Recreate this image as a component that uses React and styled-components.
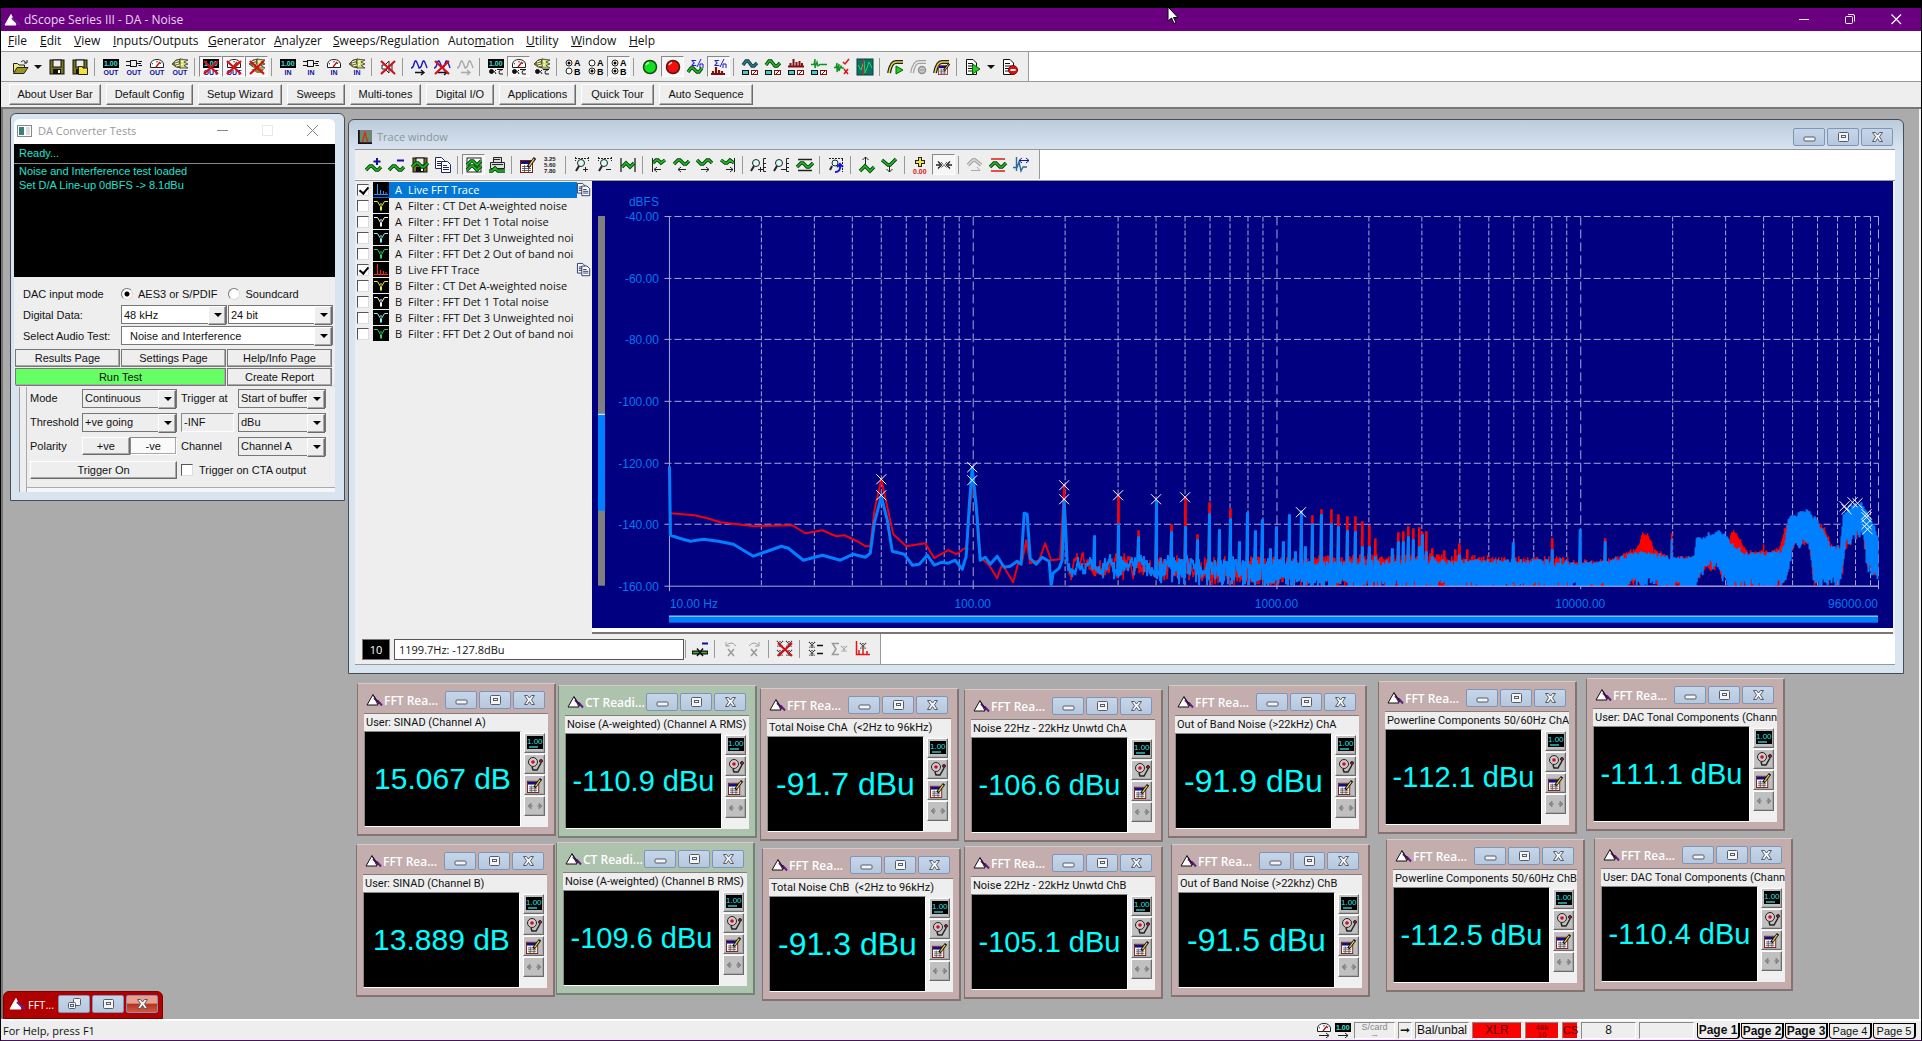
import React from 'react';
import styled, { createGlobalStyle, css } from 'styled-components';

const GlobalStyle = createGlobalStyle`
  * {
    box-sizing: border-box;
  }
  body {
    margin: 0;
    background: #000;
    overflow: hidden;
  }
  button, input, select {
    font: inherit;
    color: inherit;
    margin: 0;
    padding: 0;
    border-radius: 0;
  }
`;

const UI = '"Open Sans", "Noto Sans", sans-serif';
const CLASSIC = '"Liberation Sans", Arial, sans-serif';

const raised = css`
  border: 1px solid;
  border-color: #fff #6b6b6b #6b6b6b #fff;
  box-shadow: inset -1px -1px 0 #a8a8a8;
`;

const sunken = css`
  border: 1px solid;
  border-color: #8a8a8a #fff #fff #8a8a8a;
`;

/* ---------- icons ---------- */

const Svg = styled.svg`
  display: block;
  flex: none;
  overflow: visible;
`;

const Wave = ({ d = 'M0 10L4 6H6L10 10H12L16 6', c = '#20c020', o = '#063c10' }) => (
  <g fill="none">
    <path d={d} stroke={o} strokeWidth="3.4" />
    <path d={d} stroke={c} strokeWidth="1.6" />
  </g>
);

const Display = () => (
  <g>
    <rect x="0" y="0" width="16" height="9" fill="#000" />
    <text x="1" y="7" fontSize="7" fontFamily="Liberation Sans" fontWeight="bold" fill="#3fe0d8">1.00</text>
  </g>
);

const Plug = () => (
  <g fill="none" stroke="#111" strokeWidth="1">
    <path d="M0 2.5H4M0 6.5H4M4.5 1V8M4.5 1.5H10.5V7.5H4.5M10.5 4.5H15M12.5 2.5H16M12.5 6.5H16" />
  </g>
);

const Gauge = () => (
  <g>
    <path d="M1.5 8.5V5Q2.5 .5 8 .5T14.500 5V8.500Z" fill="#fff" stroke="#222" />
    <path d="M3 4.500L4 5M8 2V3.500M12 3.500L11 5" stroke="#222" />
    <path d="M7 8L11 3" stroke="#d00000" strokeWidth="1.3" />
  </g>
);

const Horn = () => (
  <g>
    <path d="M0 5L4 1L9 0V9L4 8Z" fill="#77771a" stroke="#333" strokeWidth=".8" />
    <path d="M8 0L16 1L12 3L16 5L12 6.500L16 9L8 9Z" fill="#d8e070" stroke="#333" strokeWidth=".8" />
    <path d="M3 3L7 1.500M3 5L7 4M4 7L8 6M9 2L11 3M9 6L11 5" stroke="#fff" fill="none" />
  </g>
);

const Caption = ({ t }) => (
  <text x="8" y="16" textAnchor="middle" fontSize="7" fontFamily="Liberation Sans" fontWeight="bold" fill="#1010a0">{t}</text>
);

const Knob = () => (
  <g fill="none" stroke="#111">
    <circle cx="3.500" cy="12.500" r="2" fill="#111" />
    <path d="M8 11Q5 12 8 15M9 10.500H15M14 11Q10 11 11.500 15H15" />
  </g>
);

const Cross = () => <path d="M1 2L15 15M15 2L1 15" stroke="#d01018" strokeWidth="2.2" />;
const Hatch = ({ x = 0, y = 0, c = '#222' }) => (
  <path d={`M${x} ${y}l6 6m0-6l-6 6M${x + 3} ${y}v6`} stroke={c} strokeWidth="1.200" strokeDasharray="1 .7" fill="none" />
);

const Radios = ({ a, b }) => (
  <g>
    <circle cx="4" cy="4" r="3" fill="#fff" stroke="#222" />
    <circle cx="4" cy="12" r="3" fill="#fff" stroke="#222" />
    {a && <circle cx="4" cy="4" r="1.500" />}
    {b && <circle cx="4" cy="12" r="1.500" />}
    <text x="9" y="7" fontSize="9" fontFamily="Liberation Sans" fontWeight="bold">A</text>
    <text x="9" y="16" fontSize="9" fontFamily="Liberation Sans" fontWeight="bold">B</text>
  </g>
);

const Panels = () => (
  <g strokeWidth="1">
    <rect x="0.500" y="11.500" width="6" height="4" fill="#40d0c8" stroke="#111" />
    <rect x="9.500" y="11.500" width="6" height="4" fill="#fff" stroke="#801010" />
    <path d="M11 15L14 12" stroke="#801010" />
  </g>
);

const Bars = ({ c = '#e02020' }) => (
  <path d="M0 7.500H16M2.500 8V4M5.500 8V0M8.500 8V3M11.500 8V2M14 8V4" stroke={c} strokeWidth="2" fill="none" />
);

const Sigma = () => (
  <g>
    <text x="3" y="7" fontSize="9" fontFamily="Liberation Sans" fontWeight="bold" fill="#1818d0">Σ</text>
    <path d="M9 8L13 0M12 9V5H15V9" stroke="#1818d0" fill="none" />
  </g>
);

const Lens = ({ x = 8, sign }) => (
  <g fill="none" stroke="#222">
    <circle cx={x} cy="6" r="3.500" fill="#d8fbf8" />
    <path d={`M${x - 2} 9L${x - 5} 14`} strokeWidth="2" />
    <path d={sign === '+' ? `M${x + 2} 12.500h5M${x + 4.5} 10v5` : `M${x + 2} 12.500h5`} />
  </g>
);

const Page = ({ x = 0, y = 0 }) => (
  <g>
    <path d={`M${x + .5} ${y + .5}h6l3 3v8h-9z`} fill="#fff" stroke="#202860" />
    <path d={`M${x + 2} ${y + 4.500}h4M${x + 2} ${y + 6.500}h6M${x + 2} ${y + 8.500}h6`} stroke="#202860" />
  </g>
);

const Notes = () => (
  <g>
    <rect x="0.500" y="3.500" width="12" height="12" fill="#fff" stroke="#801818" />
    <rect x="1" y="4" width="11" height="3" fill="#101080" />
    <path d="M2 9.500H11M2 11.500H11M2 13.500H11M4.500 8V15M8.500 8V15" stroke="#444" strokeWidth=".8" />
    <path d="M8 10L15 1" stroke="#111" strokeWidth="3" />
    <path d="M9 9L14 2" stroke="#e8d040" strokeWidth="1.300" />
  </g>
);

const Curve = ({ c = '#222', f = '#e0d840' }) => (
  <g fill="none">
    <path d="M1 14Q3 3 8 3H15" stroke={c} strokeWidth="4" />
    <path d="M1 14Q3 3 8 3H15" stroke={f} strokeWidth="1.500" />
  </g>
);

const Folder = () => (
  <g>
    <path d="M1.500 13.500V4.500H5.500L7 6H12.500V8" fill="#f0e880" stroke="#222" />
    <path d="M1.500 14.500L5 8.500H16L12 14.500Z" fill="#9a9420" stroke="#222" />
    <path d="M9 3Q12 0 14 4M12 4H15V1" fill="none" stroke="#222" />
  </g>
);

const Floppy = ({ green }) => (
  <g>
    <rect x="1" y="1" width="14" height="14" fill="#77731a" stroke="#111" />
    <rect x="4" y="1" width="8" height="7" fill="#ececec" stroke="#111" />
    <rect x="4" y="10" width="8" height="5" fill="#111" />
    <rect x="9" y="11" width="2" height="3" fill="#fff" />
    {green && <Wave />}
  </g>
);

const Sine = ({ c = '#1818c0', a = '#111' }) => (
  <g fill="none" stroke={c} strokeWidth="1.400">
    <path d="M0 9Q2 9 3 5T5 2T8 9Q10 9 11 5T13 2T16 9" />
    <path d="M4 13.500H13M10 11L13 13.500L10 16" stroke={a} />
  </g>
);

const icons = {
  open: <Folder />,
  save: <Floppy />,
  saveAs: <g><Floppy /><path d="M6.500 15.500V7.500H10L11 9H15.500V15.500Z" fill="#f0e040" stroke="#222" /></g>,
  dispOut: <g><Display /><Caption t="OUT" /></g>,
  plugOut: <g><Plug /><Caption t="OUT" /></g>,
  gaugeOut: <g><Gauge /><Caption t="OUT" /></g>,
  hornOut: <g><Horn /><Caption t="OUT" /></g>,
  dispOff: <g><Display /><Caption t="OUT" /><Cross /></g>,
  gaugeOff: <g><Gauge /><Caption t="OUT" /><Cross /></g>,
  hornOff: <g><Horn /><path d="M2 10L8 14H13L15 10Z" fill="#8a8a20" /><Cross /></g>,
  dispIn: <g><Display /><Caption t="IN" /></g>,
  plugIn: <g><Plug /><Caption t="IN" /></g>,
  gaugeIn: <g><Gauge /><Caption t="IN" /></g>,
  hornIn: <g><Horn /><Caption t="IN" /></g>,
  mute: <g><path d="M2 6H5L9 2V14L5 10H2ZM12 4V12" fill="#fff" stroke="#222" /><Cross /></g>,
  sine: <Sine />,
  sineOff: <g><Sine /><Cross /></g>,
  sineGrey: <Sine c="#a8a8a8" a="#a8a8a8" />,
  dispKnob: <g><Display /><Knob /></g>,
  gaugeKnob: <g><Gauge /><Knob /></g>,
  hornKnob: <g><Horn /><Knob /></g>,
  chA: <Radios a />,
  chB: <Radios b />,
  chAB: <Radios a b />,
  go: <g><circle cx="8" cy="8" r="6.500" fill="#10e020" stroke="#164a16" strokeWidth="1.500" /><path d="M4 6Q5 4 7 3.500" stroke="#d0ffd0" fill="none" strokeWidth="1.500" /></g>,
  stop: <g><circle cx="8" cy="8" r="6.500" fill="#f01010" stroke="#5a1010" strokeWidth="1.500" /><path d="M4 6Q5 4 7 3.500" stroke="#ffd0d0" fill="none" strokeWidth="1.500" /></g>,
  sumWave: <g><Wave d="M0 13L3 9H5L9 13H11L14 9" /><Sigma /></g>,
  sumBars: <g><path d="M0 15H14M2 15V12M5 15V8M8 15V11M11 15V12" stroke="#801010" strokeWidth="2.200" fill="none" /><Sigma /></g>,
  wavePanelsBlue: <g><Wave d="M1 6L4 2H6L10 7H12L15 4" c="#2a7a80" o="#123c48" /><Panels /></g>,
  wavePanels: <g><Wave d="M1 6L4 2H6L10 7H12L15 4" /><Panels /></g>,
  barPanels: <g><Bars c="#801010" /><Panels /></g>,
  decayPanels: <g><path d="M0 5.500H3L4 0V9L6 3L7 7L9 5.500H16" stroke="#109020" strokeWidth="1.300" fill="none" /><Panels /></g>,
  decayTest: <g><path d="M0 8.500H2L3 4V13L5 5V12L7 7L8 9H10" stroke="#109020" strokeWidth="1.300" fill="none" /><path d="M9 3L11 5L15 0M10 10L14 15M14 10L10 15" stroke="#e01010" strokeWidth="1.500" fill="none" /></g>,
  scope: <g><rect x="0" y="0" width="16" height="16" fill="#0c7068" stroke="#083c3c" /><path d="M1 6L4 11L7 2L8 14L10 9L12 3L15 9" stroke="#30d050" fill="none" /><path d="M6.500 0V16" stroke="#d02020" /></g>,
  traceLogo: <g><rect x="0" y="0" width="16" height="16" fill="#7c7c7c" /><path d="M1 0V15H16" stroke="#111" strokeWidth="2" fill="none" /><path d="M3 8L6 12L8 2L10 12L13 5" stroke="#20c030" strokeWidth="1.500" fill="none" /><path d="M5 14L8 3L11 14" stroke="#e02020" strokeWidth="1.500" fill="none" /></g>,
  curveRun: <g><Curve /><path d="M8 7L15 11L8 15Z" fill="#20d020" stroke="#0a600a" /></g>,
  curveStop: <g><Curve c="#a0a0a0" f="#eee" /><circle cx="11" cy="11" r="3.500" fill="#ccc" stroke="#909090" strokeWidth="1.500" /><path d="M9 11H13" stroke="#888" /></g>,
  curveEdit: <g><Curve /><g transform="translate(4 4) scale(.75)"><Notes /></g></g>,
  scriptRun: <g><path d="M1.500 .500H8L11.500 4V15.500H1.500Z" fill="#fff" stroke="#111" /><path d="M3 4.500H8M3 7H9M3 9.500H9M3 12H9" stroke="#111" /><path d="M7.500 5L15 10L7.500 15Z" fill="#20d020" stroke="#0a600a" /></g>,
  scriptStop: <g><path d="M1.500 .500H8L11.500 4V15.500H1.500Z" fill="#fff" stroke="#111" /><path d="M3 4.500H8M3 7H9M3 9.500H9M3 12H9" stroke="#111" /><circle cx="11" cy="11" r="4.500" fill="#e01010" stroke="#701010" /><path d="M8.500 11H13.500" stroke="#fff" strokeWidth="2" /></g>,

  addTrace: <g><Wave d="M0 13L4 9H6L10 13H12L15 10" /><path d="M11 1V8M7.500 4.500H14.500" stroke="#1010a0" strokeWidth="2" /></g>,
  delTrace: <g><Wave d="M0 13L4 9H6L10 13H12L15 10" /><path d="M8 3.500H15" stroke="#1010a0" strokeWidth="2" /></g>,
  saveTrace: <Floppy green />,
  copy: <g><Page /><Page x={6} y={4} /></g>,
  copySmall: <g><Page /><Page x={5} y={3} /></g>,
  graph: <g><rect x="1" y="1" width="14" height="14" fill="#fff" stroke="#222" /><Wave d="M1 8L5 4H7L11 8L15 4" /><Wave d="M1 13L5 9H7L11 13L15 9" /></g>,
  print: <g><path d="M4.500 5V.500H12.500V5M1.500 5.500H15.500V11.500H1.500Z" fill="#ddd" stroke="#222" /><path d="M3 7.500H14M4 2.500H11" stroke="#222" /><Wave d="M0 14H3L6 11L9 14H16" /></g>,
  notes: <Notes />,
  values: <g fontSize="6" fontFamily="Liberation Sans" fontWeight="bold" fill="#222"><text x="1" y="4">3.25</text><text x="1" y="10">5.60</text><text x="1" y="16">7.80</text></g>,
  zoomInX: <g><path d="M1 1.500H15M1.500 0V4M14.500 0V4" stroke="#222" strokeDasharray="2 1" /><Lens x={7} sign="+" /></g>,
  zoomOutX: <g><path d="M1 1.500H15M1.500 0V4M14.500 0V4" stroke="#222" strokeDasharray="2 1" /><Lens x={7} sign="-" /></g>,
  fitX: <g><path d="M1 1V15M15 1V15" stroke="#222" strokeWidth="1.300" /><Wave d="M2 10L6 6L10 10L14 6" /></g>,
  first: <g><Wave d="M2 6L5 3H7L10 6L14 3" /><path d="M1.500 1V15M3 12.500H10M3 12.500L6 10M3 12.500L6 15" stroke="#222" fill="none" /></g>,
  prev: <g><Wave d="M0 7L4 3H6L10 7H12L15 4" /><path d="M4 12.500H12M4 12.500L7 10M4 12.500L7 15" stroke="#222" fill="none" /></g>,
  next: <g><Wave d="M0 3L4 7H6L10 3H12L15 6" /><path d="M4 12.500H12M12 12.500L9 10M12 12.500L9 15" stroke="#222" fill="none" /></g>,
  last: <g><Wave d="M1 3L5 6H7L10 3L14 6" /><path d="M14.500 1V15M6 12.500H13M13 12.500L10 10M13 12.500L10 15" stroke="#222" fill="none" /></g>,
  zoomInY: <g><path d="M15 1.500H12.500V14.500H15M13 6.500H15M13 10.500H15" stroke="#222" fill="none" /><Lens x={5} sign="+" /></g>,
  zoomOutY: <g><path d="M15 1.500H12.500V14.500H15M13 6.500H15M13 10.500H15" stroke="#222" fill="none" /><Lens x={5} sign="-" /></g>,
  fitY: <g><path d="M1 2.500H15M1 13.500H15" stroke="#222" strokeWidth="1.400" /><Wave /></g>,
  zoomUndo: <g><path d="M1 1.500H15M14.500 2V15" stroke="#222" strokeDasharray="2 1" /><circle cx="7" cy="6" r="3" fill="#d8fbf8" stroke="#222" /><path d="M4 9L2 13" stroke="#222" strokeWidth="2" /><path d="M7 15Q13 15 12 8M9 10L12 7L15 10" stroke="#1818d0" strokeWidth="2" fill="none" /></g>,
  up: <g><path d="M6.500 8V0M3.500 3L6.500 0L9.500 3" stroke="#222" fill="none" /><Wave d="M1 14L6 9L11 14L15 10" /></g>,
  down: <g><Wave d="M0 3L6 8H8L14 2" /><path d="M7.500 9V15M4.500 12L7.500 15L10.500 12" stroke="#222" fill="none" /></g>,
  zero: <g><path d="M7 0V10M2 5H12" stroke="#222" strokeWidth="4" /><path d="M7 1V9M3 5H11" stroke="#f0e040" strokeWidth="2" /><text x="0" y="17" fontSize="7" fontFamily="Liberation Sans" fontWeight="bold" fill="#e01010">0.00</text></g>,
  markers: <g><path d="M5 5L11 11M11 5L5 11" stroke="#222" strokeDasharray="1 1" /><path d="M0 8H4M16 8H12M2 4.500L5.500 8L2 11.500M14 4.500L10.500 8L14 11.500" stroke="#222" fill="none" strokeWidth="1.400" /></g>,
  greyWave: <g><Wave d="M1 8L6 3H8L14 8" c="#ddd" o="#999" /><path d="M4 13.500H13M10 10L13 13.500" stroke="#aaa" /></g>,
  limits: <g><path d="M1 2H15M1 14H15" stroke="#e01818" strokeWidth="1.600" /><Wave /></g>,
  shiftX: <g><path d="M3.500 0V14M0 10.500H4L6 5L8 14L10 10H14" stroke="#2a6a90" strokeWidth="1.400" fill="none" /><path d="M6 3.500H16M9 1L6 3.500L9 6M13 1L16 3.500L13 6" stroke="#1018a0" fill="none" /></g>,

  delMark: <g><path d="M0 9.500H16V13.500H0Z" fill="#111" /><path d="M1 11.500H15" stroke="#30b830" strokeWidth="1.500" /><path d="M5 7.500L11 15M11 7.500L5 15" stroke="#111" strokeWidth="1.500" /><path d="M10 2.500H16" stroke="#1010a0" strokeWidth="2" /></g>,
  markUndo: <g><path d="M5 8L11 15M11 8L5 15" stroke="#999" strokeWidth="1.500" /><path d="M3 5Q8 -1 13 5M3 1V5H7" stroke="#a0a0a0" fill="none" /></g>,
  markRedo: <g><path d="M5 8L11 15M11 8L5 15" stroke="#999" strokeWidth="1.500" /><path d="M3 5Q8 -1 13 5M13 1V5H9" stroke="#a0a0a0" fill="none" /></g>,
  clearMarks: <g><Hatch /><Hatch x={9} /><Hatch y={9} /><Hatch x={9} y={9} /><Cross /></g>,
  listMarks: <g><Hatch x={1} y={1} /><Hatch x={1} y={9} /><path d="M9 4.500H15M9 12.500H15" stroke="#111" strokeWidth="1.500" /></g>,
  sumMarks: <g><path d="M8 2.500H1.500L5 8L1.500 13.500H8" stroke="#999" fill="none" strokeWidth="1.500" /><Hatch x={10} y={5} c="#999" /></g>,
  markBars: <g><path d="M2.500 0V13.500H16M5 13V9M9 13V8M13 13V10" stroke="#e01818" strokeWidth="1.500" fill="none" /><Hatch x={6} y={2} /></g>,

  bigDisplay: <g><rect x="0" y="1" width="16" height="13" fill="#000" /><text x="0" y="9" fontSize="8" fontFamily="Liberation Sans" fill="#30e0e0">1.00</text><path d="M2 12H11" stroke="#30c0c0" strokeWidth="1.500" /></g>,
  bell: <g fill="none" stroke="#222"><circle cx="6" cy="6" r="4.500" fill="#d8c8c8" /><circle cx="6" cy="6" r="1.800" fill="#c01030" stroke="none" /><path d="M5 11L6 14H10L14 7" strokeWidth="1.500" /><circle cx="14" cy="5" r="1.500" fill="#c01030" /></g>,
  arrows: <path d="M6 8H1M4 5L1 8L4 11ZM10 8H15M12 5L15 8L12 11Z" fill="#888" stroke="#888" />,
};

const Icon = ({ name, size = 16 }) => (
  <Svg width={size} height={size} viewBox="0 0 16 16" aria-hidden="true">{icons[name]}</Svg>
);

const AppLogo = ({ light }) => (
  <Svg width="17" height="12" viewBox="0 0 17 12" aria-hidden="true">
    <path d="M1 11L7 .500L12 11Z" fill="#fff" stroke={light ? '#fff' : '#111'} />
    <path d="M8 4L11 7H12L16 11.500" stroke="#6a1a8a" strokeWidth="2" fill="none" />
    {!light && <path d="M8 2L13 10" stroke="#111" />}
  </Svg>
);

const capGlyphs = {
  minimize: <rect x="3" y="7" width="11" height="4" rx="1" />,
  maximize: <g><rect x="3.500" y="2.500" width="10" height="9" rx="1" /><rect x="6.500" y="5.500" width="4" height="2" /></g>,
  restore: <g><rect x="7.500" y="1.500" width="7" height="7" rx="1" /><rect x="2.500" y="5.500" width="7" height="6" rx="1" /><rect x="4.500" y="7.500" width="3" height="2" /></g>,
  close: <path d="M3.500 2.500H6.500L8.500 5L10.500 2.500H13.500L10.500 6.800L13.500 11.500H10.500L8.500 8.500L6.500 11.500H3.500L6.500 6.800Z" />,
};

/* ---------- application frame ---------- */

const App = styled.div`
  display: flex;
  flex-direction: column;
  height: 100vh;
  padding-top: 8px;
  border-left: 1px solid #000;
  border-right: 1px solid #000;
  border-bottom: 1px solid #4b1060;
  font-family: ${UI};
  font-size: 12px;
  color: #111;
  white-space: nowrap;
`;

const TitleBar = styled.header`
  display: flex;
  align-items: center;
  height: 23px;
  padding: 0 2px 0 3px;
  background: #6a0080;
  color: #e8d8ee;
`;

const AppTitle = styled.h1`
  flex: 1;
  margin: 0 0 0 3px;
  font-size: 12px;
  font-weight: 400;
`;

const SystemButton = styled.button`
  width: 46px;
  height: 23px;
  display: grid;
  place-items: center;
  border: 0;
  background: none;
`;

const MenuBar = styled.nav`
  display: flex;
  align-items: center;
  gap: 14px;
  height: 21px;
  padding-left: 7px;
  background: #fff;
  border-bottom: 1px solid #999;
`;

const MenuItem = styled.button`
  flex: none;
  width: ${(p) => p.$w}px;
  height: 18px;
  line-height: 18px;
  border: 0;
  background: none;
  text-align: left;

  &::first-letter {
    text-decoration: ${(p) => (p.$plain ? 'none' : 'underline')};
  }
`;

const ToolRow = styled.div`
  display: flex;
  height: 30px;
  background: #fff;
  border-bottom: 1px solid ${(p) => (p.$line ? '#999' : '#fff')};
`;

const Tools = styled.div`
  display: flex;
  align-items: center;
  padding: 0 7px;
  background: #eee;
  border-right: 1px solid #999;
`;

const Divider = styled.span`
  width: 1px;
  height: 18px;
  margin: ${(p) => (p.$tight ? '0 2px 0 1px' : '0 4px 0 3px')};
  background: #999;
`;

const ToolButton = styled.button`
  width: ${(p) => (p.$narrow ? 14 : 23)}px;
  height: 21px;
  display: grid;
  place-items: center;
  border: 1px solid transparent;
  background: none;
  ${(p) => p.$pressed && css`
    border-color: #888 #fff #fff #888;
    background: #f6f6f6;
  `}
`;

const Arrow = styled.span`
  width: 0;
  border: 4px solid transparent;
  border-top-color: #111;
  border-bottom: 0;
`;

const UserBar = styled.div`
  display: flex;
  align-items: center;
  gap: 5px;
  height: 27px;
  padding: 0 8px 1px;
  background: #eee;
  border-bottom: 2px solid #777;
  font-family: ${CLASSIC};
  font-size: 11px;
`;

const UserButton = styled.button`
  ${raised}
  width: ${(p) => p.$w}px;
  height: 21px;
  background: #eee;
`;

const Desktop = styled.main`
  position: relative;
  flex: 1;
  min-height: 0;
  overflow: hidden;
  background: #ababab;
  border-left: 2px solid #777;
  border-right: 2px solid #f4f4f4;
`;

/* ---------- child windows ---------- */

const frames = {
  blue: { bg: '#d8e4f0', edge: '#464d57' },
  pink: { bg: '#c3adad', edge: '#857272' },
  green: { bg: '#adc3ad', edge: '#728572' },
};

const CapButton = styled.button`
  width: 32px;
  height: 18px;
  display: grid;
  place-items: center;
  border: 1px solid #7f95b5;
  border-radius: 2px;
  background: ${(p) => (p.$red ? 'linear-gradient(#e8a090 45%, #b83020 50%, #d05840)' : 'linear-gradient(#c6d6ea, #b6c8de)')};

  svg {
    fill: #f4f4f4;
    stroke: #555c68;
  }
`;

const CapButtons = styled.div`
  display: flex;
  gap: 2px;
`;

const Captions = ({ kinds = ['minimize', 'maximize', 'close'], redClose }) => (
  <CapButtons>
    {kinds.map((k) => (
      <CapButton key={k} type="button" aria-label={k} $red={redClose && k === 'close'}>
        <Svg width="17" height="14" viewBox="0 0 17 14">{capGlyphs[k]}</Svg>
      </CapButton>
    ))}
  </CapButtons>
);

const ReadingWindow = styled.section`
  position: absolute;
  left: ${(p) => p.$x}px;
  top: ${(p) => p.$y}px;
  width: 199px;
  padding: 0 7px 8px 6px;
  background: ${(p) => frames[p.$tone].bg};
  border: 1px solid ${(p) => frames[p.$tone].edge};
  border-top-color: #d8caca;
  box-shadow: inset -1px -1px 0 ${(p) => frames[p.$tone].edge};
`;

const ReadingTitle = styled.header`
  display: flex;
  align-items: center;
  height: 30px;
  padding: 3px 3px 0 2px;
  gap: 1px;
  border-bottom: 1px solid #857b7b;

  h2 {
    flex: 1;
    margin: 0;
    font-size: 12px;
    font-weight: 600;
    color: #fff;
  }
`;

const ReadingLabel = styled.div`
  height: 17px;
  padding-left: 2px;
  overflow: hidden;
  background: #eee;
  font: 11px/17px Roboto, ${CLASSIC};
  white-space: pre;
`;

const ReadingBody = styled.div`
  display: flex;
  background: #f0f0f0;
`;

const Value = styled.output`
  flex: 1;
  display: grid;
  place-items: center;
  height: 96px;
  ${sunken}
  background: #000;
  color: #00ffff;
  font-family: ${CLASSIC};
  font-size: ${(p) => p.$size}px;
  font-kerning: none;
`;

const SideTools = styled.div`
  display: flex;
  flex-direction: column;
  gap: 1px;
  padding: 2px 3px 0;
`;

const SideButton = styled.button`
  ${raised}
  width: 21px;
  height: 20px;
  display: grid;
  place-items: center;
  background: #c0c0c0;
`;

const readings = [
  { x: 354, y: 574, label: 'User: SINAD (Channel A)', value: '15.067 dB', size: 30 },
  { x: 555, y: 576, label: 'Noise (A-weighted) (Channel A RMS)', value: '-110.9 dBu', size: 29, ct: true },
  { x: 757, y: 579, label: 'Total Noise ChA  (<2Hz to 96kHz)', value: '-91.7 dBu', size: 32 },
  { x: 961, y: 580, label: 'Noise 22Hz - 22kHz Unwtd ChA', value: '-106.6 dBu', size: 29 },
  { x: 1165, y: 576, label: 'Out of Band Noise (>22kHz) ChA', value: '-91.9 dBu', size: 32 },
  { x: 1375, y: 572, label: 'Powerline Components 50/60Hz ChA', value: '-112.1 dBu', size: 29 },
  { x: 1583, y: 569, label: 'User: DAC Tonal Components (Channe', value: '-111.1 dBu', size: 29 },
  { x: 353, y: 735, label: 'User: SINAD (Channel B)', value: '13.889 dB', size: 30 },
  { x: 553, y: 733, label: 'Noise (A-weighted) (Channel B RMS)', value: '-109.6 dBu', size: 29, ct: true },
  { x: 759, y: 739, label: 'Total Noise ChB  (<2Hz to 96kHz)', value: '-91.3 dBu', size: 32 },
  { x: 961, y: 737, label: 'Noise 22Hz - 22kHz Unwtd ChB', value: '-105.1 dBu', size: 29 },
  { x: 1168, y: 735, label: 'Out of Band Noise (>22khz) ChB', value: '-91.5 dBu', size: 32 },
  { x: 1383, y: 730, label: 'Powerline Components 50/60Hz ChB', value: '-112.5 dBu', size: 29 },
  { x: 1591, y: 729, label: 'User: DAC Tonal Components (Channe', value: '-110.4 dBu', size: 29 },
];

const Reading = ({ x, y, label, value, size, ct }) => (
  <ReadingWindow $x={x} $y={y} $tone={ct ? 'green' : 'pink'}>
    <ReadingTitle>
      <AppLogo />
      <h2>{ct ? 'CT Readi...' : 'FFT Rea...'}</h2>
      <Captions />
    </ReadingTitle>
    <ReadingLabel>{label}</ReadingLabel>
    <ReadingBody>
      <Value $size={size}>{value}</Value>
      <SideTools>
        <SideButton type="button" aria-label="Display"><Icon name="bigDisplay" /></SideButton>
        <SideButton type="button" aria-label="Limits"><Icon name="bell" /></SideButton>
        <SideButton type="button" aria-label="Settings"><Icon name="notes" size={15} /></SideButton>
        <SideButton type="button" aria-label="Resize"><Icon name="arrows" /></SideButton>
      </SideTools>
    </ReadingBody>
  </ReadingWindow>
);

/* ---------- converter tests window ---------- */

const TestWindow = styled.section`
  position: absolute;
  left: 7px;
  top: 4px;
  width: 335px;
  padding: 5px 9px 8px 3px;
  background: ${frames.blue.bg};
  border: 1px solid ${frames.blue.edge};
  border-radius: 6px 6px 0 0;
  font-family: ${CLASSIC};
  font-size: 11px;
`;

const Popup = styled.div`
  background: #eee;
  border-radius: 6px;
  overflow: hidden;
`;

const PopupTitle = styled.header`
  display: flex;
  align-items: center;
  height: 25px;
  padding: 0 0 2px 3px;
  background: #fff;
  color: #999;
  font-family: ${UI};

  h2 {
    flex: 1;
    margin: 0 0 0 6px;
    font-size: 11px;
    font-weight: 400;
  }
  button {
    width: 45px;
    border: 0;
    background: none;
    display: grid;
    place-items: center;
  }
`;

const Console = styled.div`
  height: 133px;
  background: #000;
  color: #20e0d0;
  line-height: 14px;

  p {
    margin: 0;
    padding: 0 5px;
  }
  p:first-child {
    height: 20px;
    line-height: 19px;
    border-bottom: 1px solid #888;
  }
`;

const Form = styled.form`
  padding: 7px 2px 1px 1px;
  display: flex;
  flex-direction: column;
  gap: 2px;
`;

const Field = styled.div`
  display: grid;
  grid-template-columns: 105px 106px 105px;
  column-gap: 1px;
  align-items: center;
  height: 19px;

  > :first-child {
    padding-left: 8px;
  }
`;

const Radio = styled.label`
  display: flex;
  align-items: center;
  gap: 5px;
  input {
    appearance: none;
    width: 12px;
    height: 12px;
    border: 1px solid;
    border-color: #777 #ddd #ddd #777;
    border-radius: 50%;
    background: #fff;
  }
  input:checked {
    background: radial-gradient(#000 0 2px, #fff 3px);
  }
`;

const RadioGroup = styled.div`
  display: flex;
  gap: 11px;
`;

const SelectBox = styled.span`
  position: relative;
  display: block;
  grid-column: ${(p) => (p.$wide ? 'span 2' : 'auto')};
  height: 19px;
  background: ${(p) => (p.$grey ? '#eee' : '#fff')};
  border: 1px solid #777;

  select {
    width: 100%;
    height: 17px;
    padding: 0 0 0 ${(p) => (p.$wide ? 8 : 2)}px;
    appearance: none;
    border: 0;
    background: none;
  }
  &::after {
    content: '';
    position: absolute;
    right: 4px;
    top: 7px;
    border: 4px solid transparent;
    border-top-color: #000;
    border-bottom: 0;
    pointer-events: none;
  }
  &::before {
    content: '';
    position: absolute;
    right: 0;
    top: 0;
    width: 16px;
    height: 17px;
    background: #eee;
    pointer-events: none;
    ${raised}
  }
`;

const Choice = ({ id, value, ...rest }) => (
  <SelectBox {...rest}>
    <select id={id} aria-label={id} defaultValue={value}><option>{value}</option></select>
  </SelectBox>
);

const ButtonGrid = styled.div`
  display: grid;
  grid-template-columns: repeat(3, 105px);
  gap: 1px;
  margin-top: 2px;
`;

const Button = styled.button`
  ${raised}
  height: 18px;
  grid-column: ${(p) => (p.$span ? `span ${p.$span}` : 'auto')};
  background: ${(p) => (p.$green ? '#66ff66' : p.$on ? '#fafafa' : '#eee')};
  outline: ${(p) => (p.$flat ? 'none' : '1px solid #777')};
  outline-offset: -1px;
  ${(p) => p.$on && sunken}
`;

const TriggerPanel = styled.fieldset`
  display: grid;
  grid-template-columns: 48px 95px 53px 88px;
  grid-auto-rows: 20px;
  gap: 4px;
  align-items: center;
  margin: 0 0 0 5px;
  padding: 1px 8px 12px 10px;
  min-width: 0;
  background: #eee;
  border: 0;
  border-left: 1px solid #999;
  box-shadow: inset 6px 0 0 #eee, inset 7px 0 0 #aaa, inset 0 -4px 0 #f6f6f6, inset 0 -5px 0 #aaa;
`;

const LevelInput = styled.input`
  ${sunken}
  width: 53px;
  height: 19px;
  padding-left: 2px;
  background: #eee;
`;

const Pair = styled.div`
  display: grid;
  grid-template-columns: 1fr 1fr;
`;

const Check = styled.label`
  display: flex;
  align-items: center;
  gap: 6px;
`;

const Tick = styled.input.attrs({ type: 'checkbox' })`
  appearance: none;
  flex: none;
  width: 12px;
  height: 12px;
  background: #fff;
  border: 1px solid;
  border-color: #555 #ddd #ddd #555;

  &:checked::before {
    content: '';
    display: block;
    width: 4px;
    height: 7px;
    margin-left: 3px;
    border: solid #000;
    border-width: 0 2px 2px 0;
    rotate: 40deg;
  }
`;

const Wide = styled.div`
  grid-column: span 2;
  display: grid;
`;

const ConverterTests = () => (
  <TestWindow>
    <Popup>
      <PopupTitle>
        <Svg width="15" height="12" viewBox="0 0 15 12">
          <rect x=".500" y=".500" width="14" height="11" fill="#fff" stroke="#888" />
          <rect x="2" y="2" width="5" height="8" fill="#3a8078" />
          <rect x="9" y="2" width="4" height="8" fill="#ddd" />
        </Svg>
        <h2>DA Converter Tests</h2>
        <button type="button" aria-label="Minimize"><Svg width="11" height="11"><path d="M0 5.500H11" stroke="#888" /></Svg></button>
        <button type="button" aria-label="Maximize"><Svg width="11" height="11"><path d="M.500 .500H10.500V10.500H.500Z" stroke="#e8e8e8" fill="none" /></Svg></button>
        <button type="button" aria-label="Close"><Svg width="11" height="11"><path d="M0 0L11 11M11 0L0 11" stroke="#888" /></Svg></button>
      </PopupTitle>
      <Console>
        <p>Ready...</p>
        <p>Noise and Interference test loaded</p>
        <p>Set D/A Line-up 0dBFS -&gt; 8.1dBu</p>
      </Console>
      <Form>
        <Field>
          <span>DAC input mode</span>
          <RadioGroup>
            <Radio><input type="radio" name="mode" defaultChecked />AES3 or S/PDIF</Radio>
            <Radio><input type="radio" name="mode" />Soundcard</Radio>
          </RadioGroup>
        </Field>
        <Field>
          <label htmlFor="rate">Digital Data:</label>
          <Choice id="rate" value="48 kHz" />
          <Choice id="bits" value="24 bit" />
        </Field>
        <Field>
          <label htmlFor="test">Select Audio Test:</label>
          <Choice id="test" value="Noise and Interference" $wide />
        </Field>
        <ButtonGrid>
          <Button type="button">Results Page</Button>
          <Button type="button">Settings Page</Button>
          <Button type="button">Help/Info Page</Button>
          <Button type="button" $span={2} $green>Run Test</Button>
          <Button type="button">Create Report</Button>
        </ButtonGrid>
      </Form>
    </Popup>
    <TriggerPanel>
      <label htmlFor="trigger-mode">Mode</label>
      <Choice id="trigger-mode" value="Continuous" $grey />
      <label htmlFor="trigger-at">Trigger at</label>
      <Choice id="trigger-at" value="Start of buffer" $grey />
      <label htmlFor="threshold">Threshold</label>
      <Choice id="threshold" value="+ve going" $grey />
      <LevelInput aria-label="Level" defaultValue="-INF" />
      <Choice id="unit" value="dBu" $grey />
      <span>Polarity</span>
      <Pair>
        <Button type="button" $flat>+ve</Button>
        <Button type="button" $flat $on>-ve</Button>
      </Pair>
      <label htmlFor="channel">Channel</label>
      <Choice id="channel" value="Channel A" $grey />
      <Wide><Button type="button" $flat>Trigger On</Button></Wide>
      <Check><Tick />Trigger on CTA output</Check>
    </TriggerPanel>
  </TestWindow>
);

/* ---------- trace window ---------- */

const TraceWindow = styled.section`
  position: absolute;
  left: 345px;
  right: 15px;
  top: 10px;
  padding: 0 8px 8px 6px;
  background: linear-gradient(#bccbdb, #d8e4f0 30px);
  border: 1px solid ${frames.blue.edge};
  border-radius: 6px 6px 0 0;
`;

const TraceTitle = styled.header`
  display: flex;
  align-items: center;
  gap: 5px;
  height: 30px;
  padding: 4px 2px 0 3px;
  border-bottom: 1px solid #999;
  color: #8c949c;

  h2 {
    flex: 1;
    margin: 0;
    font-size: 11px;
    font-weight: 400;
  }
`;

const TraceBody = styled.div`
  display: flex;
  height: 454px;
  background: #eee;
  border-top: 1px solid #999;
`;

const TraceList = styled.ul`
  flex: none;
  width: 237px;
  margin: 0;
  padding: 1px 0 0 2px;
  list-style: none;
  font-size: 11px;
`;

const TraceItem = styled.li`
  display: flex;
  height: 16px;
  align-items: center;
`;

const TraceName = styled.label`
  display: flex;
  width: 204px;
  height: 16px;
  margin-left: 4px;
  line-height: 16px;
  background: ${(p) => (p.$on ? '#0078d7' : 'none')};
  color: ${(p) => (p.$on ? '#fff' : '#111')};

  b {
    flex: none;
    width: 13px;
    margin-left: 6px;
    font-weight: 400;
  }
`;

const PlotArea = styled.div`
  flex: 1;
  min-width: 0;
  margin-right: 2px;
  background: #fff;
  border-bottom: 2px solid #777;

  > svg {
    display: block;
    width: 100%;
    background: #000080;
  }
`;

const MarkBar = styled.div`
  display: flex;
  height: 31px;
  background: #fff;
  border-bottom: 1px solid #999;
  font-size: 11px;
`;

const MarkIndex = styled.span`
  width: 28px;
  height: 21px;
  margin-right: 4px;
  background: #000;
  color: #fff;
  border: 1px solid #777;
  text-align: center;
  line-height: 19px;
`;

const MarkInput = styled.input`
  width: 290px;
  height: 21px;
  padding-left: 4px;
  border: 1px solid #555;
  background: #fff;
`;

const traces = [
  ['A', 'Live FFT Trace', '#3090ff', true],
  ['A', 'Filter : CT Det A-weighted noise', '#f0f040'],
  ['A', 'Filter : FFT Det 1 Total noise', '#ffffff'],
  ['A', 'Filter : FFT Det 3 Unweighted noi', '#90f0f0'],
  ['A', 'Filter : FFT Det 2 Out of band noi', '#30d050'],
  ['B', 'Live FFT Trace', '#ff2020', true],
  ['B', 'Filter : CT Det A-weighted noise', '#f0f040'],
  ['B', 'Filter : FFT Det 1 Total noise', '#ffffff'],
  ['B', 'Filter : FFT Det 3 Unweighted noi', '#90f0f0'],
  ['B', 'Filter : FFT Det 2 Out of band noi', '#30d050'],
];

const TraceIcon = ({ color, live }) => (
  <Svg width="16" height="15" viewBox="0 0 16 15">
    <rect width="16" height="15" fill="#000" />
    <path
      d={live ? 'M1 12.500H15M4.500 12V2M7.500 12V8M10.500 12V9M13 12V10' : 'M1 3.500H4.500L7.500 8.500V12.500M15 3.500H11.500L8.500 8.500V12.500M8 5V7'}
      stroke={color}
      fill="none"
    />
  </Svg>
);

// Spectrum geometry: x runs 10 Hz to 96 kHz on a log axis, y from -40 to -160 dBFS
const PLOT_W = 1210;
const PLOT_H = 370;
const DECADE = 304;

const lowBlue = '0,250 1,319 10,322 21,325 34,323 49,325 64,328 84,340 98,335 112,330 119,332 134,344 153,339 171,344 184,338 196,341 201,337 205,307 212,280 218,304 223,335 235,338 243,349 250,348 258,339 265,349 273,346 279,347 286,344 293,353 297,340 300,290 303,251 307,290 311,344 316,341 321,348 328,340 335,351 341,350 348,345 352,348 355,297 358,298 361,342 367,348 373,341 380,345 382,369 384,357 390,352 393,344 395,284 398,345';
const lowRed = '1,297 25,299 38,302 51,306 85,310 123,309 136,317 153,314 167,320 175,319 188,325 196,330 201,330 205,295 212,263 220,300 224,318 237,330 256,327 265,342 279,334 287,338 297,331 301,290 303,263 308,297 311,341 320,349 328,362 333,348 344,366 349,347 353,345 357,324 361,347 370,344 376,327 382,344 391,343 395,269 398,343';

const hiBlue = [[398, 343], [500, 346], [560, 347], [700, 348], [930, 347], [950, 342], [970, 337], [990, 339], [1005, 343], [1026, 341], [1028, 323], [1040, 318], [1050, 315], [1056, 319], [1065, 330], [1082, 338], [1112, 336], [1117, 325], [1120, 302], [1138, 294], [1146, 301], [1155, 315], [1163, 332], [1172, 330], [1175, 298], [1185, 287], [1195, 288], [1202, 302], [1208, 317], [1210, 325]];
const loBlue = [[398, 353], [440, 358], [500, 362], [560, 364], [700, 367], [800, 370], [958, 370], [962, 364], [985, 364], [990, 370], [1025, 370], [1035, 352], [1050, 347], [1054, 360], [1060, 368], [1110, 369], [1118, 357], [1124, 330], [1140, 323], [1143, 343], [1145, 365], [1170, 365], [1174, 353], [1176, 330], [1187, 318], [1194, 313], [1199, 350], [1210, 358]];
const hiRed = [[398, 343], [600, 345], [750, 342], [850, 345], [930, 345], [945, 342], [960, 336], [968, 331], [975, 315], [981, 320], [985, 333], [1000, 342], [1026, 341], [1050, 325], [1060, 325], [1065, 313], [1070, 322], [1080, 336], [1110, 334], [1116, 313], [1120, 304], [1138, 298], [1150, 306], [1157, 314], [1163, 330], [1172, 330], [1176, 305], [1195, 296], [1210, 325]];

// [x, blue top, red top]
const peaks = [
  [425, 319, 330], [449, 307, 279], [469, 320, 314], [487, 284, 290], [502, 315, 308], [516, 310, 281],
  [528, 323, 318], [540, 297, 286], [550, 313, 330], [561, 302, 292], [570, 325, 340], [578, 296, 320],
  [586, 314, 330], [593, 303, 325], [601, 332, 340], [607, 310, 330], [614, 325, 340], [620, 298, 320],
  [626, 335, 340], [632, 294, 310], [636, 330, 340], [643, 307, 299], [652, 298, 293], [662, 307, 293],
  [669, 310, 298], [678, 314, 300], [686, 315, 300], [693, 330, 305], [700, 330, 309], [706, 340, 322],
  [723, 332, 340], [729, 325, 316], [734, 325, 315], [739, 320, 310], [744, 323, 312], [750, 330, 311],
  [753, 318, 316], [757, 335, 315], [763, 340, 332], [775, 345, 334], [786, 345, 333], [790, 338, 327],
  [798, 345, 333], [844, 326, 340], [883, 333, 322], [911, 313, 340], [936, 325, 322], [1003, 323, 317],
  [1095, 340, 328],
];

const marks = [
  [212, 263], [212, 279], [303, 251], [303, 264], [395, 269], [395, 283], [449, 279], [487, 283], [516, 281],
  [632, 296], [1176, 290], [1178, 293], [1184, 286], [1189, 287], [1198, 298], [1198, 301], [1198, 308], [1199, 313],
];

const random = (seed) => () => {
  seed = (seed * 16807) % 2147483647;
  return seed / 2147483647;
};

const at = (pts, x) => {
  const i = pts.findIndex((p) => p[0] >= x);
  if (i <= 0) return pts[Math.max(i, 0)][1];
  const [x0, y0] = pts[i - 1];
  const [x1, y1] = pts[i];
  return y0 + ((y1 - y0) * (x - x0)) / (x1 - x0);
};

const spectrum = (hi, lo, column, seed) => {
  const rnd = random(seed);
  let d = 'M398 345';
  let drift = 350;
  for (let x = 399; x < PLOT_W; x += 1) {
    const dense = Math.min(1, (x - 398) / 220) ** 2;
    let top = at(hi, x) - rnd() * (x < 900 ? 8 : 5) + 3;
    let bottom = at(lo, x) + (rnd() - 0.5) * 12;
    if (rnd() > dense) {
      drift += (rnd() - 0.5) * 14 + (352 - drift) * 0.25;
      top = drift - 1;
      bottom = drift + 2;
    }
    const peak = peaks.find((p) => p[0] === x || (p[0] === x - 1 && x < 1000));
    if (peak) top = peak[column];
    d += `L${x} ${Math.round(top)}L${x} ${Math.min(PLOT_H, Math.round(bottom))}`;
  }
  return d;
};

const bluePath = spectrum(hiBlue, loBlue, 1, 4711);
const redPath = spectrum(hiRed, loBlue, 2, 991);
const line = (pts) => `M${pts.split(' ').join('L')}`;

const gridX = [];
for (let decade = 0; decade < 4; decade += 1) {
  for (let n = 1; n < 10; n += 1) {
    const x = Math.round(DECADE * (decade + Math.log10(n)));
    if (x > 0) gridX.push({ x, major: n === 1 });
  }
}
gridX.push({ x: PLOT_W, major: true });

const Plot = () => (
  <svg viewBox="0 0 1302 447" role="img" aria-label="FFT spectrum">
    <rect x="6" y="35" width="7" height="370" fill="#808080" />
    <rect x="6" y="233" width="7" height="97" fill="#0080ff" />
    <path d="M6 233.500H13" stroke="#fff" />
    <g fill="#0078f0" fontSize="12" fontFamily="Liberation Sans">
      <text x="67" y="25" textAnchor="end">dBFS</text>
      {[-40, -60, -80, -100, -120, -140, -160].map((v, i) => (
        <text key={v} x="67" y={Math.round(40 + i * 61.67)} textAnchor="end">{v.toFixed(2)}</text>
      ))}
      <text x="78" y="427">10.00 Hz</text>
      <text x="381" y="427" textAnchor="middle">100.00</text>
      <text x="685" y="427" textAnchor="middle">1000.00</text>
      <text x="989" y="427" textAnchor="middle">10000.00</text>
      <text x="1287" y="427" textAnchor="end">96000.00</text>
    </g>
    <g transform="translate(77.5 35.5)" fill="none" stroke="#a9a9d6">
      {gridX.map(({ x, major }) => (
        <path key={x} d={`M${x} 0V${major ? 375 : 370}`} strokeDasharray={major ? '9 4' : '5 2'} />
      ))}
      {[0, 1, 2, 3, 4, 5].map((i) => (
        <path key={i} d={`M-5 ${Math.round(i * 61.67)}H${PLOT_W}`} strokeDasharray="7 3" />
      ))}
      <path d={`M0 0V375M-5 370H${PLOT_W}`} />
      <path d={line(lowRed)} stroke="#f00010" strokeWidth="2" strokeLinejoin="round" />
      <path d={redPath} stroke="#ff0000" strokeWidth="1.500" />
      <path d={line(lowBlue)} stroke="#0080ff" strokeWidth="3" strokeLinejoin="round" />
      <path d={bluePath} stroke="#0080ff" strokeWidth="2" strokeLinejoin="bevel" />
      <path d={`M400 370H${PLOT_W}`} />
      <path d={marks.map(([x, y]) => `M${x - 5} ${y - 5}l10 10m0-10l-10 10`).join('')} stroke="#fff" />
    </g>
    <rect x="77" y="435" width="1210" height="7" fill="#0080ff" />
    <path d="M77 435.500H1287" stroke="#c0e0ff" />
  </svg>
);

const ToolGroups = ({ groups }) => groups.map((group, g) => (
  <React.Fragment key={g}>
    {g > 0 && <Divider />}
    {group.split(' ').map((entry) => {
      if (entry === 'v') {
        return <ToolButton key={entry} type="button" aria-label="More" $narrow><Arrow /></ToolButton>;
      }
      const pressed = entry.startsWith('*');
      const name = entry.replace('*', '');
      return <ToolButton key={name} type="button" aria-label={name} $pressed={pressed}><Icon name={name} /></ToolButton>;
    })}
  </React.Fragment>
));

const TracePanel = () => (
  <TraceWindow>
    <TraceTitle>
      <Icon name="traceLogo" size={14} />
      <h2>Trace window</h2>
      <Captions />
    </TraceTitle>
    <ToolRow>
      <Tools>
        <ToolGroups
          groups={[
            'addTrace delTrace saveTrace copy',
            '*graph print',
            'notes values',
            'zoomInX zoomOutX fitX',
            'first prev next last',
            'zoomInY zoomOutY fitY',
            'zoomUndo',
            'up down',
            'zero *markers',
            'greyWave limits shiftX',
          ]}
        />
      </Tools>
    </ToolRow>
    <TraceBody>
      <TraceList>
        {traces.map(([ch, name, color, live], i) => (
          <TraceItem key={i}>
            <Tick id={`trace-${i}`} defaultChecked={live} />
            <TraceName htmlFor={`trace-${i}`} $on={i === 0}>
              <TraceIcon color={color} live={live} />
              <b>{ch}</b>
              {name}
            </TraceName>
            {live && <Icon name="copySmall" size={14} />}
          </TraceItem>
        ))}
      </TraceList>
      <PlotArea><Plot /></PlotArea>
    </TraceBody>
    <MarkBar>
      <Tools>
        <MarkIndex>10</MarkIndex>
        <MarkInput aria-label="Mark reading" defaultValue="1199.7Hz: -127.8dBu" />
        <Divider $tight />
        <ToolGroups groups={['delMark', 'markUndo markRedo', 'clearMarks', 'listMarks sumMarks markBars']} />
      </Tools>
    </MarkBar>
  </TraceWindow>
);

/* ---------- minimised window, status bar, pointer ---------- */

const MiniWindow = styled.section`
  position: absolute;
  left: 0;
  bottom: 0;
  display: flex;
  align-items: center;
  gap: 2px;
  width: 160px;
  height: 28px;
  padding: 0 4px 2px 5px;
  background: #b00000;
  border: 1px solid #800000;
  border-radius: 6px 6px 0 0;
  color: #fff;
  font-size: 11px;

  span {
    flex: 1;
  }
`;

const StatusBar = styled.footer`
  display: flex;
  align-items: center;
  gap: 3px;
  height: 21px;
  padding: 0 5px 0 2px;
  background: #eee;
  border-top: 2px solid #fff;
  font-size: 11px;

  > p {
    flex: 1;
    margin: 0;
  }
`;

const StatusCell = styled.span`
  ${sunken}
  width: ${(p) => p.$w}px;
  height: 17px;
  display: grid;
  place-items: center;
  align-content: center;
  font: ${(p) => p.$size || 12}px/7px ${CLASSIC};
  text-align: center;
  white-space: pre-line;
  color: ${(p) => (p.$red ? '#5a0000' : p.$dim ? '#888' : '#111')};
  background: ${(p) => (p.$red ? '#ff0000' : '#eee')};
`;

const PageTabs = styled.div`
  display: flex;
  gap: 1px;
`;

const PageTab = styled.button`
  width: 43px;
  height: 16px;
  background: #eee;
  border: 1px solid #000;
  border-top-width: ${(p) => (p.$active ? 0 : 1)}px;
  border-right-width: 2px;
  border-radius: 0 0 4px 4px;
  font: ${(p) => (p.$bold ? 'bold 12px' : '11px')}/14px ${CLASSIC};
`;

const Pointer = styled.svg`
  position: absolute;
  left: 1167px;
  top: 6px;
`;

const menus = [
  ['File', 18], ['Edit', 20], ['View', 25], ['Inputs/Outputs', 81], ['Generator', 52], ['Analyzer', 45],
  ['Sweeps/Regulation', 101], ['Automation', 64], ['Utility', 31], ['Window', 44], ['Help', 25],
];

const userButtons = [
  ['About User Bar', 92], ['Default Config', 87], ['Setup Wizard', 84], ['Sweeps', 58], ['Multi-tones', 71],
  ['Digital I/O', 68], ['Applications', 77], ['Quick Tour', 73], ['Auto Sequence', 94],
];

export default function DScope() {
  return (
    <App>
      <GlobalStyle />
      <TitleBar>
        <AppLogo light />
        <AppTitle>dScope Series III - DA - Noise</AppTitle>
        <SystemButton type="button" aria-label="Minimize"><Svg width="11" height="11"><path d="M0 5.500H10" stroke="#fff" /></Svg></SystemButton>
        <SystemButton type="button" aria-label="Restore">
          <Svg width="11" height="11" fill="none" stroke="#fff"><rect x=".500" y="2.500" width="7" height="7" rx="1" /><path d="M3 .500H8Q9.500 .500 9.500 2V7.500" /></Svg>
        </SystemButton>
        <SystemButton type="button" aria-label="Close"><Svg width="11" height="11"><path d="M.500 .500L10 10M10 .500L.500 10" stroke="#fff" strokeWidth="1.200" /></Svg></SystemButton>
      </TitleBar>
      <MenuBar>
        {menus.map(([name, w]) => (
          <MenuItem key={name} type="button" $w={w} $plain={name === 'Automation'}>
            {name === 'Automation' ? <>Auto<u>m</u>ation</> : name}
          </MenuItem>
        ))}
      </MenuBar>
      <ToolRow $line>
        <Tools>
          <ToolGroups
            groups={[
              'open v save saveAs',
              'dispOut plugOut gaugeOut hornOut',
              '*dispOff *gaugeOff *hornOff',
              'dispIn plugIn gaugeIn hornIn',
              'mute',
              'sine sineOff sineGrey',
              'dispKnob *gaugeKnob hornKnob',
              'chA chB *chAB',
              'go *stop sumWave *sumBars',
              'wavePanelsBlue wavePanels barPanels decayPanels decayTest scope',
              'curveRun curveStop curveEdit',
              'scriptRun v scriptStop',
            ]}
          />
        </Tools>
      </ToolRow>
      <UserBar>
        {userButtons.map(([name, w]) => <UserButton key={name} type="button" $w={w}>{name}</UserButton>)}
      </UserBar>
      <Desktop>
        <ConverterTests />
        {readings.map((r) => <Reading key={`${r.x}-${r.y}`} {...r} />)}
        <TracePanel />
        <MiniWindow>
          <AppLogo light />
          <span>FFT...</span>
          <Captions kinds={['restore', 'maximize', 'close']} redClose />
        </MiniWindow>
      </Desktop>
      <StatusBar>
        <p>For Help, press F1</p>
        <Svg width="16" height="16" viewBox="0 0 16 16"><Gauge /><path d="M3 12.500H13M10 10L13 12.500L10 15" stroke="#222" fill="none" /></Svg>
        <Svg width="16" height="16" viewBox="0 0 16 16"><Display /><path d="M3 12.500H13M10 10L13 12.500L10 15" stroke="#222" fill="none" /></Svg>
        <StatusCell $w={41} $size={9} $dim>{'S/card\n→'}</StatusCell>
        <StatusCell $w={14}>➞</StatusCell>
        <StatusCell $w={54}>Bal/unbal</StatusCell>
        <StatusCell $w={50} $red>XLR</StatusCell>
        <StatusCell $w={34} $size={8} $red>{'48k\n16'}</StatusCell>
        <StatusCell $w={16} $size={11} $red>CS</StatusCell>
        <StatusCell $w={55}>8</StatusCell>
        <StatusCell $w={55} />
        <PageTabs>
          <PageTab type="button" $bold $active>Page 1</PageTab>
          <PageTab type="button" $bold>Page 2</PageTab>
          <PageTab type="button" $bold>Page 3</PageTab>
          <PageTab type="button">Page 4</PageTab>
          <PageTab type="button">Page 5</PageTab>
        </PageTabs>
      </StatusBar>
      <Pointer width="12" height="19" viewBox="0 0 12 19" aria-hidden="true">
        <path d="M1 1V15L4.500 12L7 17.500L9 16.500L6.500 11.500H11Z" fill="#fff" stroke="#000" />
      </Pointer>
    </App>
  );
}
